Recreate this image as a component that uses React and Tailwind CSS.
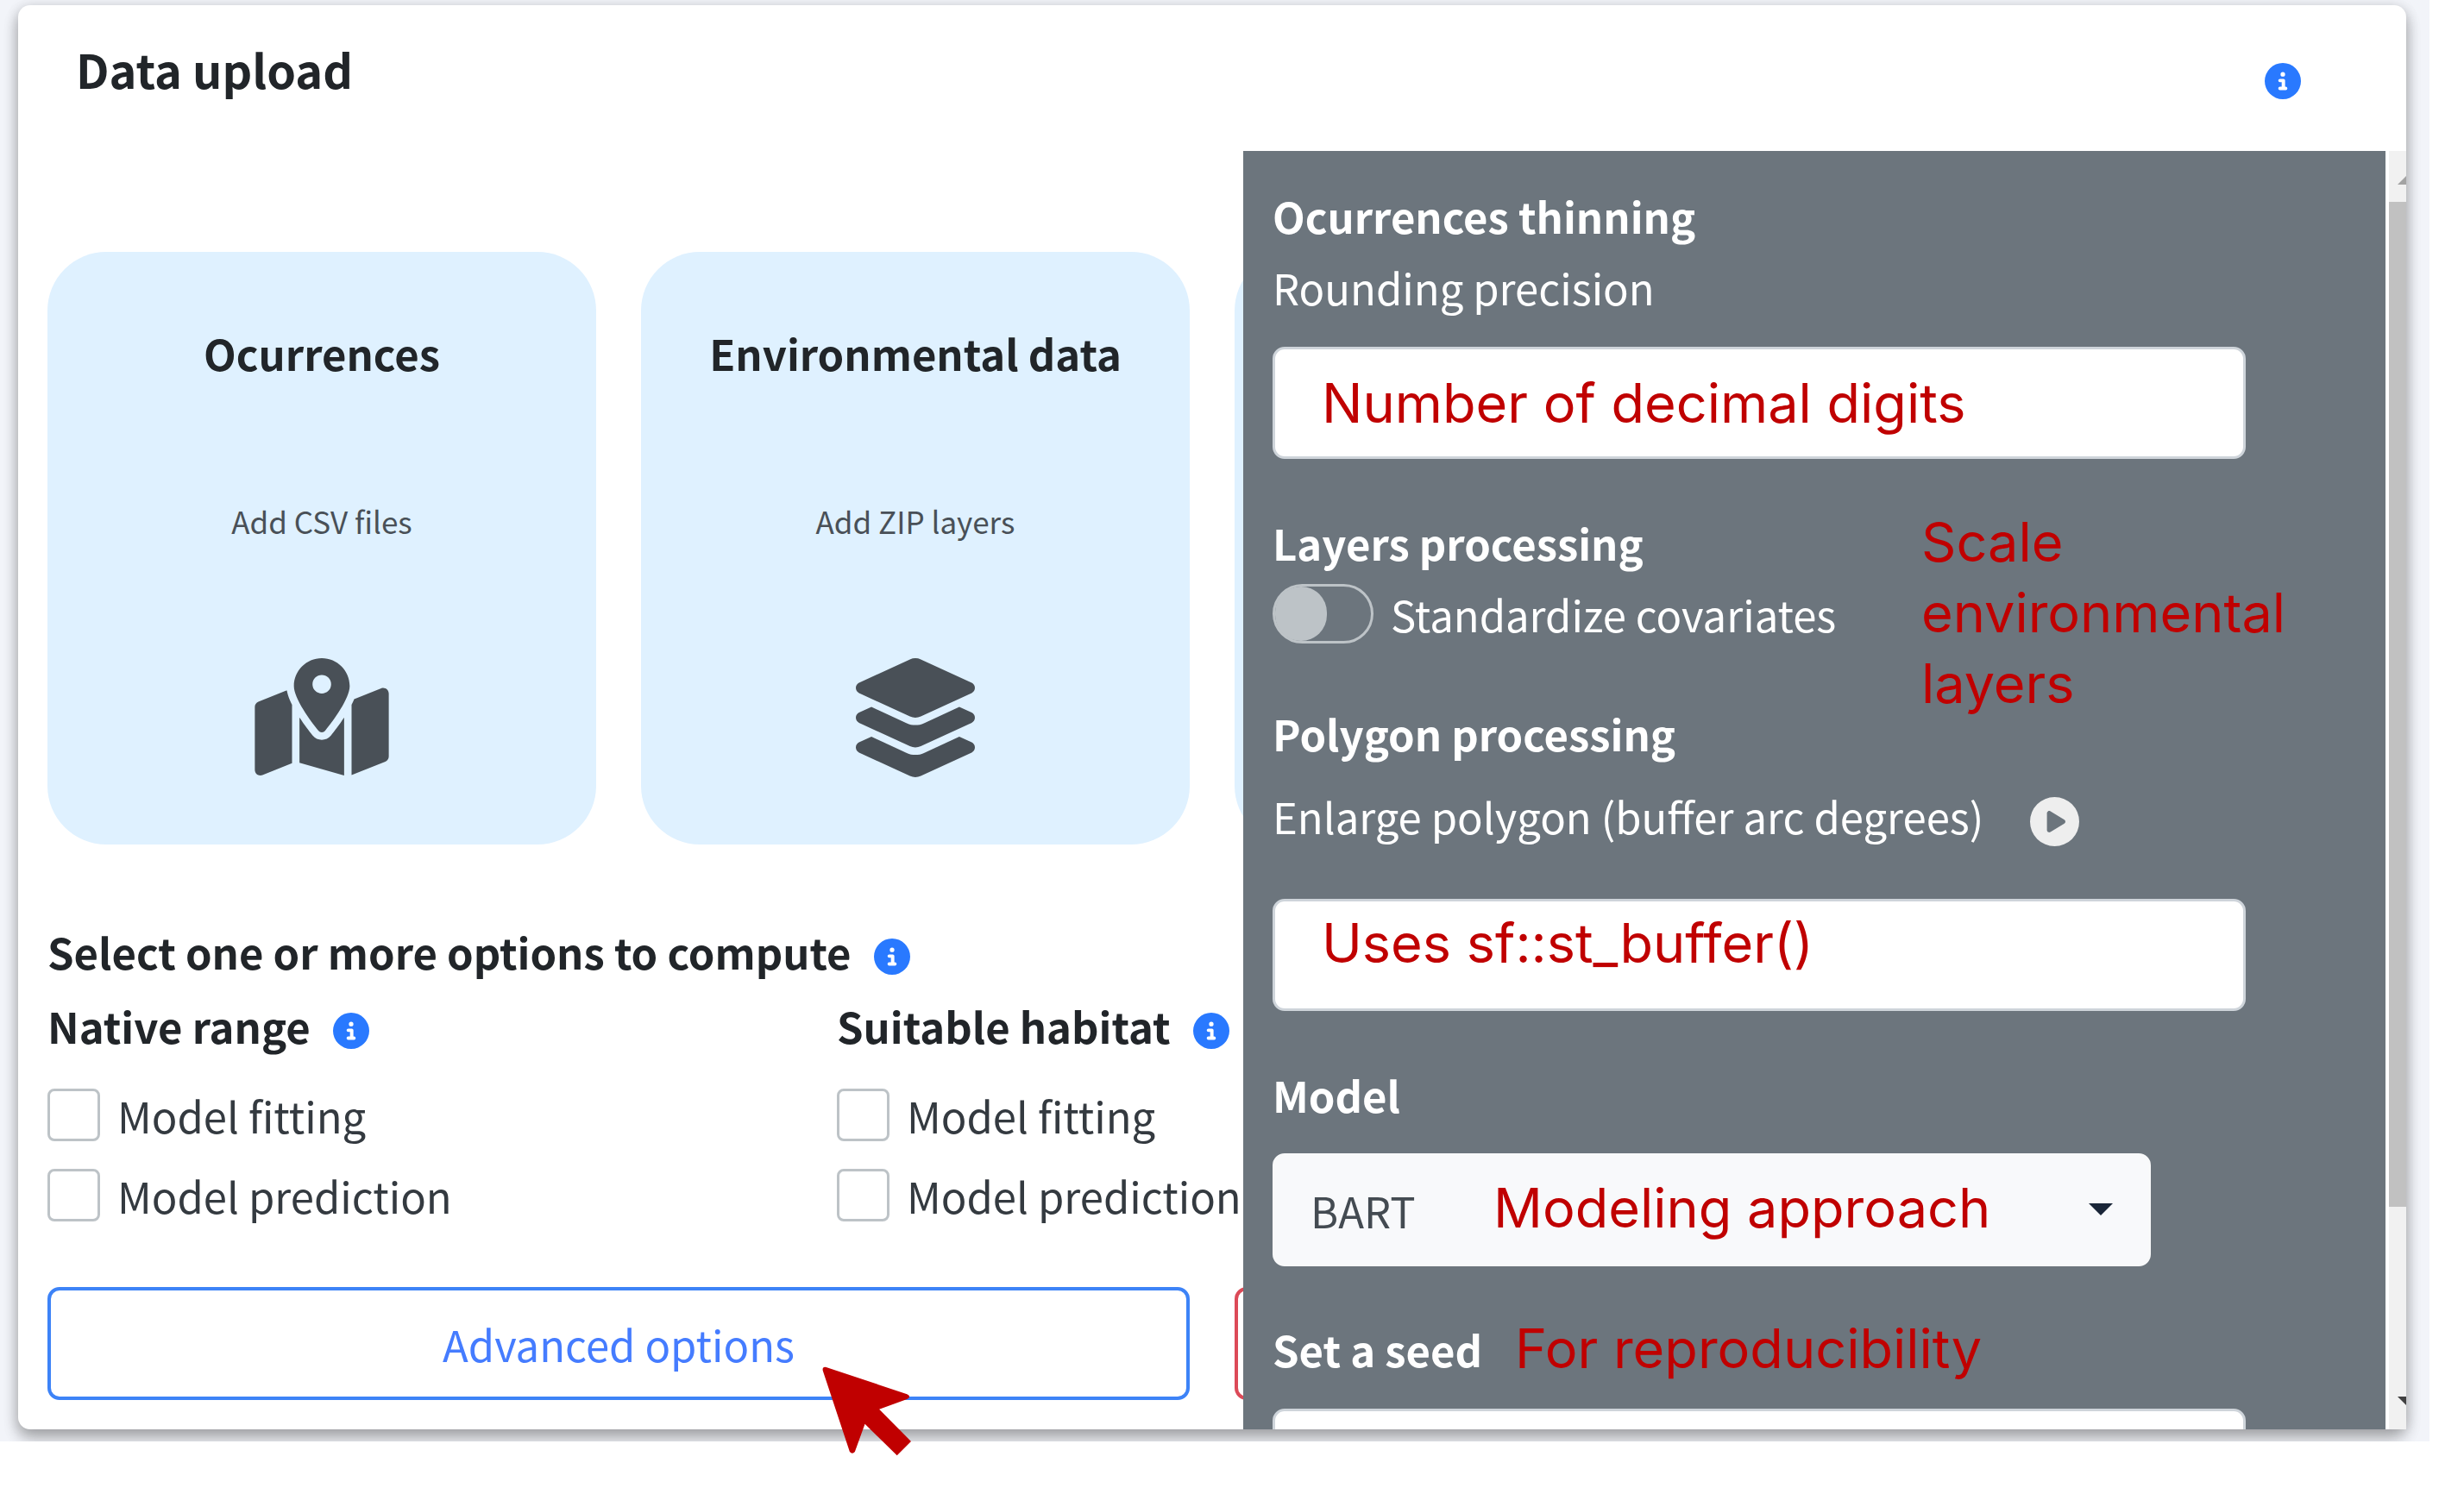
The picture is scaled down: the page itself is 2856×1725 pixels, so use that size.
import { FaCircleInfo, FaCirclePlay, FaLayerGroup, FaMapLocationDot } from "react-icons/fa6";

function InfoButton({ label }) {
  return (
    <button type="button" aria-label={label} className="shrink-0 text-[#2979ff]">
      <FaCircleInfo className="size-[42px]" />
    </button>
  );
}

function UploadTile({ title, hint, children }) {
  return (
    <div className="flex h-[687px] flex-col items-center rounded-[68px] bg-[#dff1ff] pt-20 text-[#495057]">
      {title && <h2 className="text-[49px] leading-[73px] font-bold text-[#212529]">{title}</h2>}
      {hint && <p className="my-[133px] text-[35px] leading-[52px]">{hint}</p>}
      {children}
    </div>
  );
}

function CheckOption({ id, label }) {
  return (
    <label htmlFor={id} className="flex items-center gap-5 text-[49px] leading-[61px] whitespace-nowrap text-[#343a40]">
      <input
        id={id}
        type="checkbox"
        className="size-[61px] shrink-0 appearance-none rounded-[8px] border-3 border-[#bdc3c7] bg-white checked:bg-[#2979ff]"
      />
      {label}
    </label>
  );
}

function OptionGroup({ id, title }) {
  return (
    <fieldset className="min-w-0">
      <legend className="flex gap-[26px] text-[49px] leading-[73px] font-bold whitespace-nowrap text-[#212529]">
        {title}
        <span className="flex items-center pt-3">
          <InfoButton label={title + " help"} />
        </span>
      </legend>
      <div className="mt-[37px] flex flex-col gap-8">
        <CheckOption id={id + "-fitting"} label="Model fitting" />
        <CheckOption id={id + "-prediction"} label="Model prediction" />
      </div>
    </fieldset>
  );
}

const headingClass = "text-[49px] leading-[83px] font-bold text-white";
const labelClass = "text-[49px] leading-[83px] text-white";
const noteClass = "font-[Inter,sans-serif] text-[63px] text-[#c00000]";
const fieldClass =
  "block h-[130px] w-full rounded-[14px] border-3 border-[#ced4da] bg-white pl-[54px] font-[Inter,sans-serif] text-[63px] text-[#c00000] outline-none";

function AdvancedPanel() {
  return (
    <aside className="absolute top-[169px] right-0 bottom-0 flex w-[48.7%] overflow-hidden">
      <div className="min-w-0 flex-1 bg-[#6c757d] pt-[33px] pr-[162px] pl-[34px]">
        <h3 className={headingClass}>Ocurrences thinning</h3>
        <label htmlFor="precision" className={labelClass + " block"}>Rounding precision</label>
        <input id="precision" type="text" defaultValue="Number of decimal digits" className={fieldClass + " mt-7"} />

        <div className="relative mt-[55px]">
          <h3 className={headingClass}>Layers processing</h3>
          <label htmlFor="standardize" className={labelClass + " flex items-center gap-5"}>
            <input
              id="standardize"
              type="checkbox"
              role="switch"
              className="flex h-[69px] w-[117px] appearance-none rounded-full border-3 border-[#bdc3c7] before:h-full before:w-[60px] before:rounded-full before:bg-[#bdc3c7]"
            />
            Standardize covariates
          </label>
          <p className={noteClass + " absolute top-0 left-2/3 leading-[82px]"}>
            Scale<br />environmental<br />layers
          </p>
        </div>

        <h3 className={headingClass + " mt-[55px]"}>Polygon processing</h3>
        <div className="mt-[13px] flex gap-[54px]">
          <label htmlFor="buffer" className={labelClass}>Enlarge polygon (buffer arc degrees)</label>
          <button type="button" aria-label="Apply buffer" className="pt-[14px] text-[#eeeeee]">
            <FaCirclePlay className="size-[57px]" />
          </button>
        </div>
        <input id="buffer" type="text" defaultValue="Uses sf::st_buffer()" className={fieldClass + " mt-[55px] pb-7"} />

        <label htmlFor="model" className={headingClass + " mt-[55px] block"}>Model</label>
        <div className="relative mt-[27px] w-[1018px] max-w-full">
          <select
            id="model"
            defaultValue="BART"
            className="block h-[131px] w-full appearance-none rounded-[14px] border-3 border-[#f8f9fa] bg-[#f8f9fb] pl-[41px] text-[49px] text-[#444b52]"
          >
            <option>BART</option>
          </select>
          <span className={noteClass + " pointer-events-none absolute inset-y-0 left-64 flex items-center pb-1"}>
            Modeling approach
          </span>
          <svg viewBox="0 0 28 14" className="pointer-events-none absolute top-[58px] right-11 h-[14px] w-7" aria-hidden="true">
            <path d="M0 0H28L14 14Z" fill="#1a2638" />
          </svg>
        </div>

        <div className="mt-[54px] flex gap-[38px]">
          <label htmlFor="seed" className={headingClass}>Set a seed</label>
          <span className={noteClass + " leading-[83px]"}>For reproducibility</span>
        </div>
        <input id="seed" type="text" className={fieldClass + " mt-7"} />
      </div>

      <div className="flex w-6 flex-col border-l-4 border-white bg-[#f1f1f1]" aria-hidden="true">
        <div className="flex h-[59px] items-center justify-end pt-2">
          <svg viewBox="0 0 10 10" className="size-[10px]"><path d="M0 10L10 0V10Z" fill="#a3a3a3" /></svg>
        </div>
        <div className="h-[1165px] bg-[#c1c1c1]" />
        <div className="flex flex-1 items-end justify-end pb-7">
          <svg viewBox="0 0 10 10" className="size-[10px]"><path d="M0 0H10V10Z" fill="#404040" /></svg>
        </div>
      </div>
    </aside>
  );
}

export default function App() {
  return (
    <div className="overflow-hidden bg-white font-['Noto_Sans_CJK_SC',sans-serif]">
      <main className="mr-10 bg-[#f2f4f9] pt-[6px] pr-[27px] pb-[14px] pl-[21px]">
        <section className="relative rounded-[14px] bg-white shadow-[0_0_16px_rgba(0,0,0,0.08),0_9px_18px_rgba(0,0,0,0.16),0_9px_18px_rgba(0,0,0,0.2)]">
          <header className="flex h-[169px] items-start justify-between pt-[34px] pr-[122px] pl-[67px]">
            <h1 className="text-[54px] leading-[80px] font-bold text-[#212529]">Data upload</h1>
            <div className="pt-[33px]">
              <InfoButton label="Data upload help" />
            </div>
          </header>

          <div className="px-[34px] pt-[117px] pb-[34px]">
            <div className="grid grid-cols-4 gap-[52px]">
              <UploadTile title="Ocurrences" hint="Add CSV files">
                <FaMapLocationDot className="h-[138px] w-[156px]" />
              </UploadTile>
              <UploadTile title="Environmental data" hint="Add ZIP layers">
                <FaLayerGroup className="h-[138px] w-[156px]" />
              </UploadTile>
              <UploadTile />
              <UploadTile />
            </div>

            <div className="mt-[87px] flex gap-[26px]">
              <h2 className="text-[49px] leading-[73px] font-bold text-[#212529]">Select one or more options to compute</h2>
              <span className="flex items-center pt-3">
                <InfoButton label="Options help" />
              </span>
            </div>

            <div className="mt-[13px] grid grid-cols-3 gap-[45px]">
              <OptionGroup id="native" title="Native range" />
              <OptionGroup id="habitat" title="Suitable habitat" />
            </div>

            <div className="mt-[76px] grid grid-cols-2 gap-[52px]">
              <div className="relative">
                <button
                  type="button"
                  className="h-[131px] w-full rounded-[14px] border-4 border-[#3d83f7] text-[49px] text-[#457cff]"
                >
                  Advanced options
                </button>
                <svg viewBox="0 0 310 312" className="absolute top-[92px] left-[898px] z-20 w-[103px]" aria-hidden="true">
                  <path
                    d="M2 14Q0 0 14 3L296 97Q305 100 304 107Q303 112 294 115L199 150L310 262L261 311L149 201L114 298Q105 309 96 298Z"
                    fill="#c00000"
                  />
                </svg>
              </div>
              <button type="button" aria-label="Reset" className="h-[131px] w-full rounded-[14px] border-4 border-[#dc4a58]" />
            </div>
          </div>

          <AdvancedPanel />
        </section>
      </main>
      <footer className="relative z-10 h-[54px] bg-white" />
    </div>
  );
}
